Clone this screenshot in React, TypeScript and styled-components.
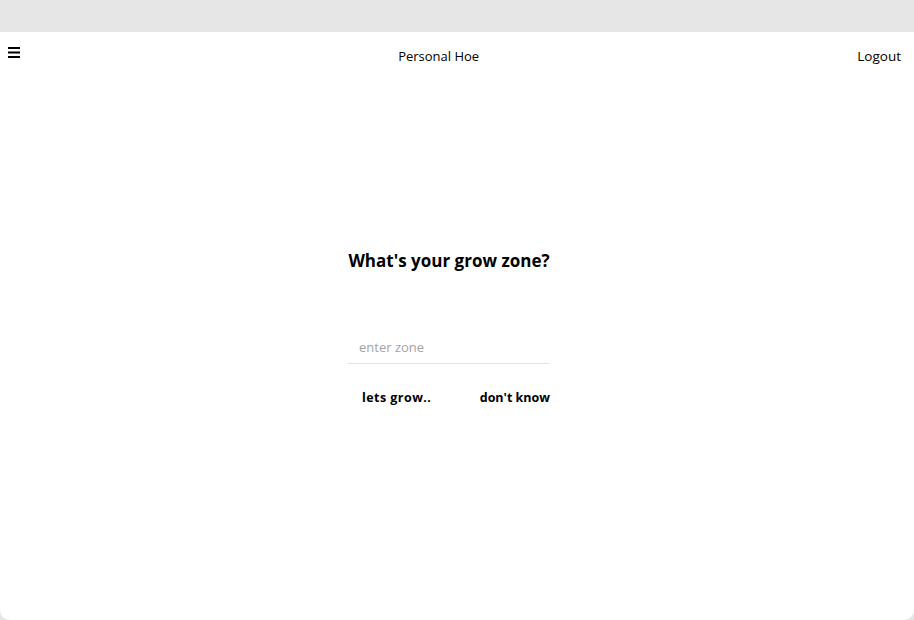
import React from "react";
import styled, { createGlobalStyle } from "styled-components";

const Global = createGlobalStyle`
  html, body { margin: 0; padding: 0; background: #e6e6e6; }
  body { font-family: "Open Sans", "Noto Sans", sans-serif; color: #000; }
  * { box-sizing: border-box; }
`;

const Frame = styled.div`
  display: flex;
  flex-direction: column;
  height: 620px;
  padding-top: 32px;
`;

const Panel = styled.div`
  flex: 1;
  background: #fff;
  border-radius: 0 0 10px 10px;
  display: flex;
  flex-direction: column;
`;

const Header = styled.header`
  display: flex;
  justify-content: space-between;
  align-items: flex-start;
  padding: 12px 13px 0 8px;
  height: 56px;
`;

const Menu = styled.button`
  border: 0;
  background: none;
  padding: 0;
  margin-top: 3px;
  cursor: pointer;
  display: flex;
`;

const Title = styled.div`
  font-size: 13px;
  line-height: 24px;
`;

const Logout = styled.button`
  border: 0;
  background: none;
  padding: 0;
  font-family: inherit;
  font-size: 13.5px;
  line-height: 24px;
  cursor: pointer;
`;

const Main = styled.main`
  flex: 1;
  display: flex;
  flex-direction: column;
  align-items: center;
  padding: 161px 16px 0 0;
`;

const Form = styled.div`
  width: 202px;
  display: flex;
  flex-direction: column;
`;

const Heading = styled.h1`
  margin: 0;
  font-size: 17px;
  font-weight: 700;
  line-height: 24px;
  text-align: center;
  white-space: nowrap;
`;

const Input = styled.input`
  margin-top: 59px;
  border: 0;
  border-bottom: 1px solid #e5e5e5;
  outline: none;
  padding: 6px 11px 6px;
  font-family: inherit;
  font-size: 13px;
  line-height: 19px;
  &::placeholder { color: #a3a3a8; }
`;

const Actions = styled.div`
  display: flex;
  justify-content: space-between;
  padding-left: 14px;
  margin-top: 24px;
`;

const Action = styled.button<{ $spread?: boolean }>`
  border: 0;
  background: none;
  padding: 0;
  font-family: inherit;
  font-size: 12.5px;
  font-weight: 700;
  line-height: 20px;
  letter-spacing: ${(p) => (p.$spread ? "0.45px" : "0")};
  cursor: pointer;
`;

const Burger = () => (
  <svg width="12" height="12" viewBox="0 0 12 12">
    <rect x="0" y="0" width="12" height="2" fill="#000" />
    <rect x="0" y="4.5" width="12" height="2" fill="#000" />
    <rect x="0" y="9" width="12" height="2" fill="#000" />
  </svg>
);

export default function App() {
  return (
    <>
      <Global />
      <Frame>
        <Panel>
          <Header>
            <Menu aria-label="menu"><Burger /></Menu>
            <Title>Personal Hoe</Title>
            <Logout>Logout</Logout>
          </Header>
          <Main>
            <Form>
              <Heading>What's your grow zone?</Heading>
              <Input placeholder="enter zone" />
              <Actions>
                <Action $spread>lets grow..</Action>
                <Action>don't know</Action>
              </Actions>
            </Form>
          </Main>
        </Panel>
      </Frame>
    </>
  );
}
